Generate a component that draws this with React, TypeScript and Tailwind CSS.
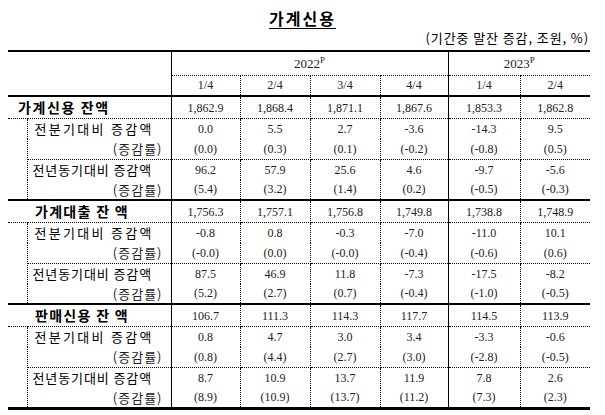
import React from 'react';

const KR = "font-['Noto_Sans_CJK_KR',sans-serif]";
const SERIF = "font-['Liberation_Serif','Times_New_Roman',serif]";

interface Section {
  title: string;
  titleClass: string;
  main: string[];
  qoq: string[];
  qoqRate: string[];
  yoy: string[];
  yoyRate: string[];
}

const sections: Section[] = [
  {
    title: '가계신용 잔액',
    titleClass: 'pl-[10px] tracking-[1.6px]',
    main: ['1,862.9', '1,868.4', '1,871.1', '1,867.6', '1,853.3', '1,862.8'],
    qoq: ['0.0', '5.5', '2.7', '-3.6', '-14.3', '9.5'],
    qoqRate: ['(0.0)', '(0.3)', '(0.1)', '(-0.2)', '(-0.8)', '(0.5)'],
    yoy: ['96.2', '57.9', '25.6', '4.6', '-9.7', '-5.6'],
    yoyRate: ['(5.4)', '(3.2)', '(1.4)', '(0.2)', '(-0.5)', '(-0.3)'],
  },
  {
    title: '가계대출 잔 액',
    titleClass: 'pl-[27px] tracking-[1.3px]',
    main: ['1,756.3', '1,757.1', '1,756.8', '1,749.8', '1,738.8', '1,748.9'],
    qoq: ['-0.8', '0.8', '-0.3', '-7.0', '-11.0', '10.1'],
    qoqRate: ['(-0.0)', '(0.0)', '(-0.0)', '(-0.4)', '(-0.6)', '(0.6)'],
    yoy: ['87.5', '46.9', '11.8', '-7.3', '-17.5', '-8.2'],
    yoyRate: ['(5.2)', '(2.7)', '(0.7)', '(-0.4)', '(-1.0)', '(-0.5)'],
  },
  {
    title: '판매신용 잔 액',
    titleClass: 'pl-[27px] tracking-[1.3px]',
    main: ['106.7', '111.3', '114.3', '117.7', '114.5', '113.9'],
    qoq: ['0.8', '4.7', '3.0', '3.4', '-3.3', '-0.6'],
    qoqRate: ['(0.8)', '(4.4)', '(2.7)', '(3.0)', '(-2.8)', '(-0.5)'],
    yoy: ['8.7', '10.9', '13.7', '11.9', '7.8', '2.6'],
    yoyRate: ['(8.9)', '(10.9)', '(13.7)', '(11.2)', '(7.3)', '(2.3)'],
  },
];

// per-side border styles, so dotted and solid edges can sit on one cell
const DOT_R = 'border-r border-r-black [border-right-style:dotted]';
const SOLID_R = 'border-r border-r-black [border-right-style:solid]';
const DOT_B = 'border-b border-b-black [border-bottom-style:dotted]';
const THICK_T = 'border-t-2 border-t-black [border-top-style:solid]';
const BOTTOM = 'border-b-[3px] border-b-black [border-bottom-style:solid]';

// right border of each data column: dotted between quarters, solid between years
const colBorder = (i: number) => (i === 3 ? SOLID_R : i === 5 ? '' : DOT_R);

const DataCells = ({ values, extra = '' }: { values: string[]; extra?: string }) => (
  <>
    {values.map((v, i) => (
      <td key={i} className={`${SERIF} text-[12px] text-center text-[#222] p-0 ${colBorder(i)} ${extra}`}>
        {v}
      </td>
    ))}
  </>
);

const SectionRows = ({ s, last }: { s: Section; last: boolean }) => (
  <>
    <tr className="h-[21px]">
      <td colSpan={2} className={`${KR} font-bold text-[14px] text-black whitespace-pre p-0 ${THICK_T} ${SOLID_R} ${DOT_B} ${s.titleClass}`}>
        {s.title}
      </td>
      <DataCells values={s.main} extra={`${DOT_B} ${THICK_T}`} />
    </tr>
    <tr className="h-[20px]">
      <td rowSpan={4} className={`p-0 ${DOT_R} ${last ? BOTTOM : ''}`} />
      <td className={`${KR} text-[13px] text-black pl-[7px] p-0 tracking-[2.3px] whitespace-pre ${SOLID_R}`}>전분기대비 증감액</td>
      <DataCells values={s.qoq} />
    </tr>
    <tr className="h-[21px]">
      <td className={`${KR} text-[13px] text-[#222] text-right pr-[8px] p-0 tracking-[1px] ${SOLID_R} ${DOT_B}`}>(증감률)</td>
      <DataCells values={s.qoqRate} extra={DOT_B} />
    </tr>
    <tr className="h-[20px]">
      <td className={`${KR} text-[13px] text-black pl-[5px] p-0 tracking-[0.9px] whitespace-pre ${SOLID_R}`}>전년동기대비 증감액</td>
      <DataCells values={s.yoy} />
    </tr>
    <tr className="h-[20px]">
      <td className={`${KR} text-[13px] text-[#222] text-right pr-[8px] p-0 tracking-[1px] ${SOLID_R} ${last ? BOTTOM : ''}`}>(증감률)</td>
      <DataCells values={s.yoyRate} extra={last ? BOTTOM : ''} />
    </tr>
  </>
);

export default function App() {
  return (
    <div className="w-[605px] h-[415px] bg-white overflow-hidden">
      <div className="h-[28px] flex items-end justify-center">
        <span className={`${KR} font-bold text-[16px] leading-[20px] tracking-[2px] underline underline-offset-[3px] text-black`}>가계신용</span>
      </div>
      <div className={`${KR} h-[20px] leading-[20px] text-[13px] tracking-[0.9px] text-black text-right pr-[16px]`}>(기간중 말잔 증감, 조원, %)</div>
      <table className="ml-[8px] mt-[2px] w-[582px] table-fixed border-collapse">
        <colgroup>
          <col className="w-[19px]" />
          <col className="w-[144px]" />
          <col className="w-[69px]" />
          <col className="w-[70px]" />
          <col className="w-[70px]" />
          <col className="w-[68px]" />
          <col className="w-[72px]" />
          <col className="w-[70px]" />
        </colgroup>
        <tbody>
          <tr className="h-[24px]">
            <td colSpan={2} rowSpan={2} className={`p-0 ${THICK_T} ${SOLID_R}`} />
            <td colSpan={4} className={`${SERIF} text-[13px] text-center text-[#222] p-0 ${THICK_T} ${SOLID_R} ${DOT_B}`}>
              2022<sup className="text-[9px] -top-[5px]">P</sup>
            </td>
            <td colSpan={2} className={`${SERIF} text-[13px] text-center text-[#222] p-0 ${THICK_T} ${DOT_B}`}>
              2023<sup className="text-[9px] -top-[5px]">P</sup>
            </td>
          </tr>
          <tr className="h-[21px]">
            {['1/4', '2/4', '3/4', '4/4', '1/4', '2/4'].map((q, i) => (
              <td key={i} className={`${SERIF} text-[12px] text-center text-[#222] p-0 ${colBorder(i)}`}>
                {q}
              </td>
            ))}
          </tr>
          {sections.map((s, i) => (
            <SectionRows key={i} s={s} last={i === sections.length - 1} />
          ))}
        </tbody>
      </table>
    </div>
  );
}
